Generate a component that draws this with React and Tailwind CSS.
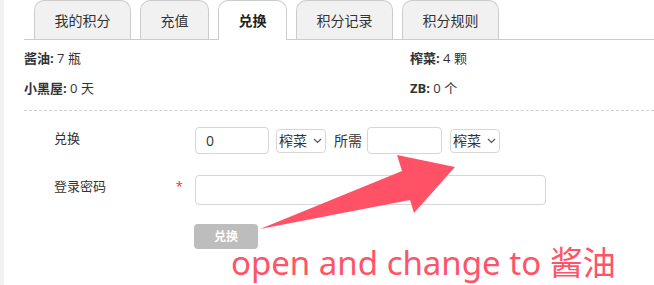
import React from "react";

const tabs = [
  { name: "我的积分", w: "w-[97px]" },
  { name: "充值", w: "w-[69px]" },
  { name: "兑换", w: "w-[69px]", active: true },
  { name: "积分记录", w: "w-[97px]" },
  { name: "积分规则", w: "w-[97px]" },
];

function Chevron() {
  return (
    <svg width="9" height="6" viewBox="0 0 9 6" className="ml-[6px]">
      <path d="M1 1 L4.5 4.5 L8 1" fill="none" stroke="#555" strokeWidth="1.2" />
    </svg>
  );
}

function FakeSelect() {
  return (
    <div className="flex h-[24px] w-[50px] items-center rounded-[4px] border border-[#d6d6d6] pl-[2px] text-[14px] text-[#333]">
      榨菜
      <Chevron />
    </div>
  );
}

export default function App() {
  return (
    <div
      className="relative flex h-[285px] w-[654px] overflow-hidden bg-white"
      style={{ fontFamily: '"Open Sans", "Noto Sans CJK SC", sans-serif' }}
    >
      <div className="w-[4px] shrink-0 bg-[#f1f1f1]" />

      <div className="flex-1 pl-[20px]">
        {/* tabs */}
        <div className="flex h-[40px] gap-[9px] border-b border-[#cccccc] pl-[10px]">
          {tabs.map((t) => (
            <div
              key={t.name}
              className={
                t.active
                  ? `${t.w} -mb-px flex h-[40px] items-center justify-center rounded-t-[10px] border border-b-0 border-[#cccccc] bg-white text-[14px] font-bold text-[#222]`
                  : `${t.w} flex h-[39px] items-center justify-center rounded-t-[10px] border border-b-0 border-[#cccccc] bg-[#f1f1f1] text-[14px] text-[#333]`
              }
            >
              {t.name}
            </div>
          ))}
        </div>

        {/* info */}
        <div className="border-b border-dashed border-[#cfcfcf] pt-[4px] pb-[6px] text-[13px] text-[#333]">
          <div className="flex h-[30px] items-center">
            <div className="w-[386px]">
              <b>酱油:</b> 7 瓶
            </div>
            <div>
              <b>榨菜:</b> 4 颗
            </div>
          </div>
          <div className="flex h-[30px] items-center">
            <div className="w-[386px]">
              <b>小黑屋:</b> 0 天
            </div>
            <div>
              <b>ZB:</b> 0 个
            </div>
          </div>
        </div>

        {/* form */}
        <div className="pt-[16px] text-[13px] text-[#333]">
          <div className="flex items-start pl-[30px]">
            <div className="w-[141px] pt-[2px]">兑换</div>
            <div className="flex items-center">
              <div className="flex h-[27px] w-[74px] items-center rounded-[4px] border border-[#d6d6d6] pl-[10px] text-[14px]">
                0
              </div>
              <div className="ml-[7px]">
                <FakeSelect />
              </div>
              <span className="ml-[8px] text-[14px]">所需</span>
              <div className="ml-[5px] h-[27px] w-[75px] rounded-[4px] border border-[#d6d6d6]" />
              <div className="ml-[8px]">
                <FakeSelect />
              </div>
            </div>
          </div>

          <div className="mt-[21px] flex items-start pl-[30px]">
            <div className="flex w-[141px] justify-between pt-[2px] pr-[12px]">
              <span>登录密码</span>
              <span className="text-[#ff2a2a]">*</span>
            </div>
            <div className="h-[30px] w-[351px] rounded-[4px] border border-[#d6d6d6]" />
          </div>

          <div className="mt-[19px] pl-[170px]">
            <button className="h-[25px] w-[64px] rounded-[4px] bg-[#bdbdbd] text-[12px] font-bold text-white">
              兑换
            </button>
          </div>
        </div>
      </div>

      {/* annotation */}
      <svg
        className="pointer-events-none absolute left-0 top-0"
        width="654"
        height="285"
      >
        <polygon
          points="260,229 402,171 397,155 455,167 414,213 410,200"
          fill="#ff5266"
        />
      </svg>
      <div
        className="absolute left-[231px] top-[245px] whitespace-nowrap text-[33px] leading-[36px] text-[#ff5468]"
        style={{ fontFamily: '"Noto Sans", "Noto Sans CJK SC", sans-serif' }}
      >
        open and change to 酱油
      </div>
    </div>
  );
}
